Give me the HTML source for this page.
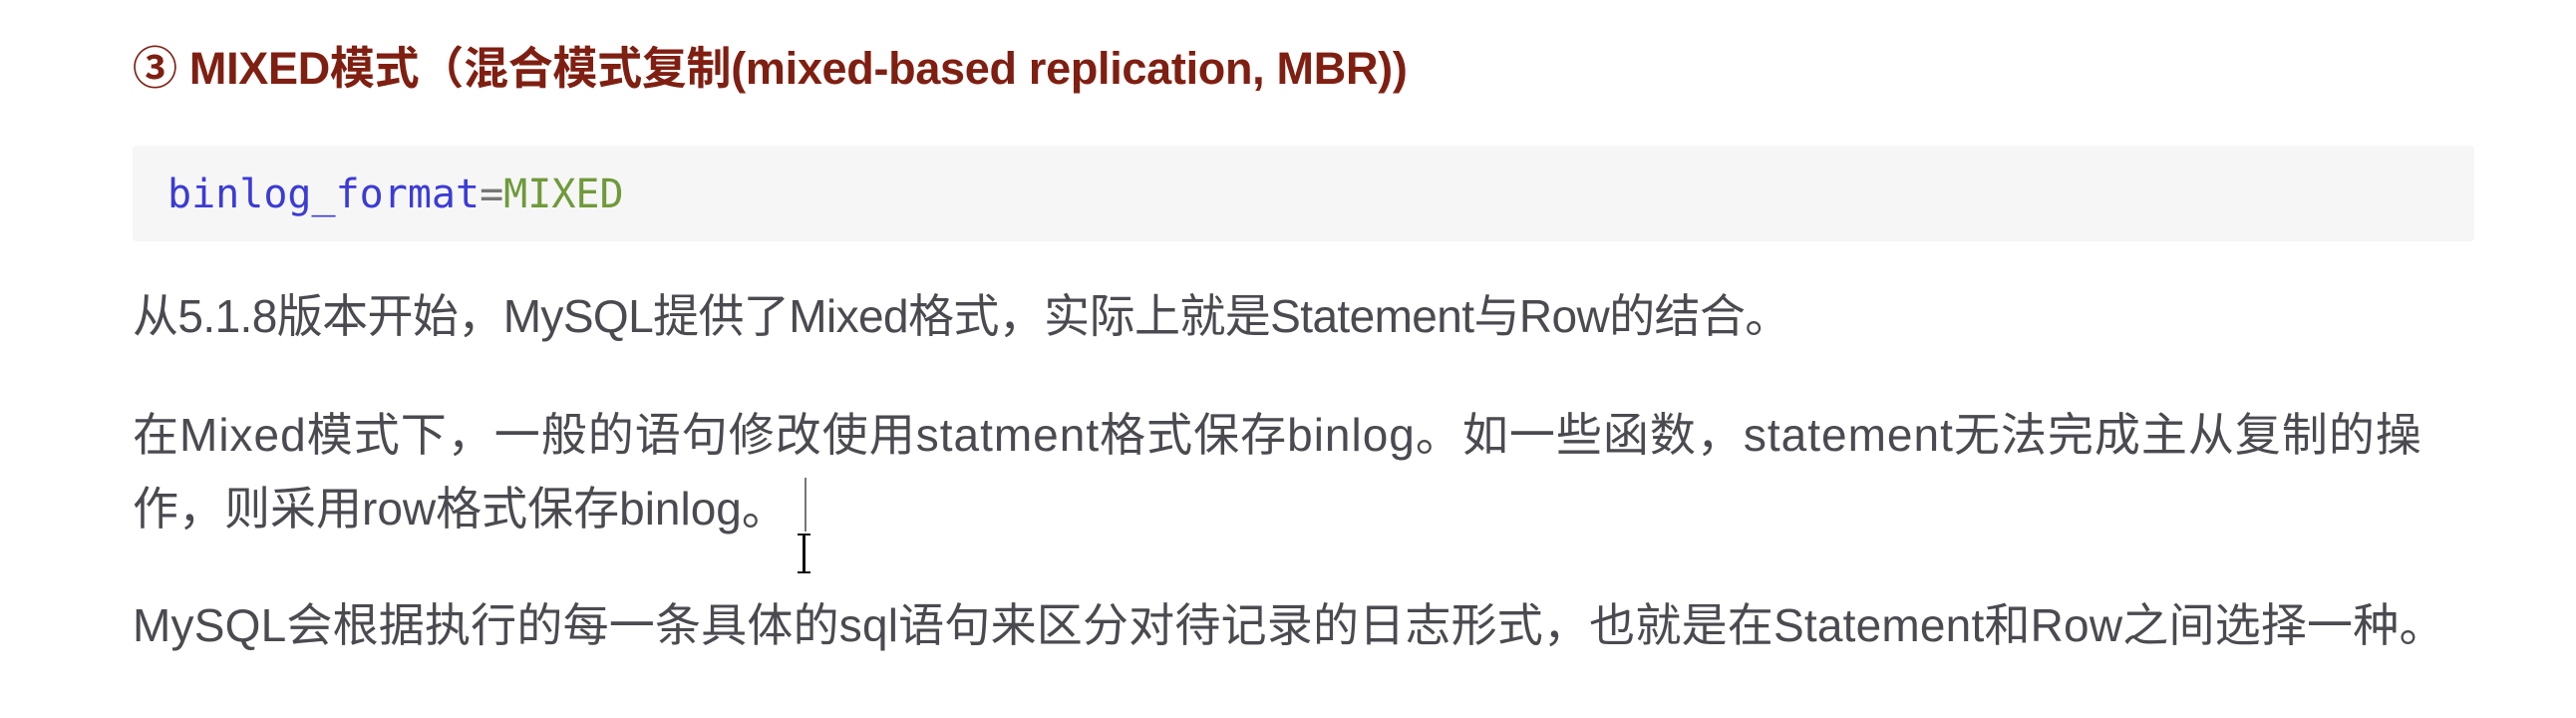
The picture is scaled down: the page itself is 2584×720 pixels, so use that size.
<!DOCTYPE html>
<html><head><meta charset="utf-8"><style>
html,body{margin:0;padding:0;background:#fff;width:2584px;height:720px;overflow:hidden;position:relative}
.t{position:absolute;left:133px;white-space:nowrap;font-family:"Liberation Sans","Noto Sans CJK SC",sans-serif;color:#4a4a50;font-size:46px;line-height:72px}
h3{position:absolute;left:133px;top:33px;margin:0;white-space:nowrap;font-family:"Liberation Sans","Noto Sans CJK SC",sans-serif;font-size:45px;line-height:72px;color:#7f1f12;font-weight:bold;letter-spacing:-0.3px}
.code{position:absolute;left:133px;top:146px;width:2349px;height:96px;background:#f6f6f6;border-radius:4px}
.code span.c{position:absolute;left:35px;top:25px;font-family:"DejaVu Sans Mono","Liberation Mono",monospace;font-size:40px;line-height:48px;white-space:nowrap}
.b{color:#3b3bd6}.g{color:#777}.m{color:#6f9a3a}
</style></head><body>
<h3>③ MIXED模式（混合模式复制(mixed-based replication, MBR))</h3>
<div class="code"><span class="c"><span class="b">binlog_format</span><span class="g">=</span><span class="m">MIXED</span></span></div>
<div class="t" style="top:281px;letter-spacing:-0.6px">从5.1.8版本开始，MySQL提供了Mixed格式，实际上就是Statement与Row的结合。</div>
<div class="t" style="top:400px;letter-spacing:1px">在Mixed模式下，一般的语句修改使用statment格式保存binlog。如一些函数，statement无法完成主从复制的操</div>
<div class="t" style="top:474px">作，则采用row格式保存binlog。</div>
<div class="t" style="top:591px;letter-spacing:0.2px">MySQL会根据执行的每一条具体的sql语句来区分对待记录的日志形式，也就是在Statement和Row之间选择一种。</div>
<div style="position:absolute;left:807px;top:479px;width:2px;height:54px;background:#777"></div>
<div style="position:absolute;left:805px;top:535px;width:3px;height:40px;background:#111"></div>
<div style="position:absolute;left:800px;top:535px;width:13px;height:2px;background:#111"></div>
<div style="position:absolute;left:800px;top:573px;width:13px;height:2px;background:#111"></div>
</body></html>
